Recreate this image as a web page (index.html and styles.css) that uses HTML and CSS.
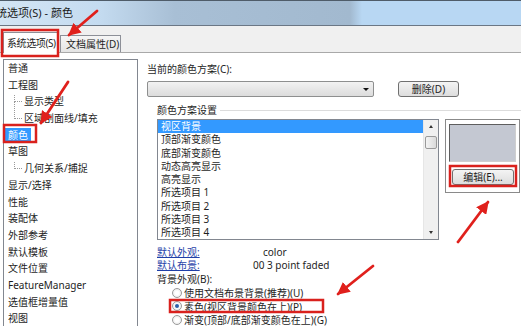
FILE: index.html
```html
<!DOCTYPE html>
<html lang="zh-CN">
<head>
    <meta charset="UTF-8">
    <meta name="viewport" content="width=device-width, initial-scale=1.0">
    <title>系统选项(S) - 颜色</title>
    <link rel="stylesheet" href="styles.css">
</head>
<body>

<div class="window">
    <div class="titlebar"><span class="title">系统选项(S) - 颜色</span></div>

    <div class="tabstrip">
        <div class="tab tab-active">系统选项(S)</div>
        <div class="tab">文档属性(D)</div>
    </div>

    <div class="page">
        <ul class="tree">
            <li>普通</li>
            <li>工程图</li>
            <li class="child first">显示类型</li>
            <li class="child">区域剖面线/填充</li>
            <li><span class="selected">颜色</span></li>
            <li>草图</li>
            <li class="child first">几何关系/捕捉</li>
            <li>显示/选择</li>
            <li>性能</li>
            <li>装配体</li>
            <li>外部参考</li>
            <li>默认模板</li>
            <li>文件位置</li>
            <li>FeatureManager</li>
            <li>选值框增量值</li>
            <li>视图</li>
        </ul>

        <div class="main">
            <div class="label">当前的颜色方案(C):</div>
            <div class="scheme-row">
                <div class="combo"><span class="combo-arrow"></span></div>
                <button class="btn btn-delete">删除(D)</button>
            </div>

            <div class="group-head"><span>颜色方案设置</span></div>
            <div class="group-body">
                <div class="listbox">
                    <ul class="items">
                        <li class="selected-item">视区背景</li>
                        <li>顶部渐变颜色</li>
                        <li>底部渐变颜色</li>
                        <li>动态高亮显示</li>
                        <li>高亮显示</li>
                        <li>所选项目 1</li>
                        <li>所选项目 2</li>
                        <li>所选项目 3</li>
                        <li>所选项目 4</li>
                    </ul>
                    <div class="scrollbar">
                        <span class="arrow-up"></span>
                        <span class="thumb"></span>
                        <span class="arrow-down"></span>
                    </div>
                </div>
                <div class="preview">
                    <div class="swatch"></div>
                    <button class="btn btn-edit">编辑(E)...</button>
                </div>
            </div>

            <div class="info">
                <div class="info-row"><a class="link">默认外观:</a><span class="value value-color">color</span></div>
                <div class="info-row"><a class="link">默认布景:</a><span class="value">00 3 point faded</span></div>
                <div class="info-row">背景外观(B):</div>
                <div class="radio"><span class="dot"></span>使用文档布景背景(推荐)(U)</div>
                <div class="radio"><span class="dot checked"></span>素色(视区背景颜色在上)(P)</div>
                <div class="radio"><span class="dot"></span>渐变(顶部/底部渐变颜色在上)(G)</div>
            </div>
        </div>
    </div>

    <!-- red annotation marks drawn over the dialog -->
    <svg class="marks" width="521" height="326" viewBox="0 0 521 326">
        <defs>
            <marker id="head" viewBox="0 0 10 10" refX="9" refY="5" markerWidth="4.5" markerHeight="4.5" orient="auto">
                <path d="M0,0 L10,5 L0,10 z" fill="#e0201c"/>
            </marker>
        </defs>
        <g fill="none" stroke="#d9211d" stroke-width="2.5">
            <rect x="2" y="30" width="56" height="26"/>
            <rect x="4" y="125" width="32" height="17"/>
            <rect x="450" y="166" width="66" height="20"/>
            <rect x="170" y="300" width="153" height="12"/>
        </g>
        <g stroke="#e0201c" stroke-width="2.8" stroke-linecap="round" marker-end="url(#head)">
            <line x1="97" y1="11" x2="69" y2="35"/>
            <line x1="68" y1="82" x2="41" y2="123"/>
            <line x1="373" y1="266" x2="338" y2="294"/>
            <line x1="458" y1="242" x2="488" y2="202"/>
        </g>
    </svg>
</div>

</body>
</html>
```

FILE: styles.css
```css
body {
    margin: 0;
    padding: 0;
    background-color: #ffffff;
    font-family: "Noto Sans", "Noto Sans CJK SC", sans-serif;
    font-size: 10px;
    color: #1e1e1e;
}

.window {
    position: relative;
    width: 521px;
    height: 326px;
    overflow: hidden;
    background-color: #ffffff;
}

.titlebar {
    box-sizing: border-box;
    height: 26px;
    border-top: 1px solid #4f5c69;
    border-bottom: 1px solid #6b7785;
    background: linear-gradient(to right, #d3e5f4 0, #c4dbf0 100px, #a8bfd5 175px, #a2b9cf 350px, #b8d7f3 362px, #b8d7f3 100%);
    overflow: hidden;
    white-space: nowrap;
}

.title {
    display: inline-block;
    margin-left: -15px;
    line-height: 24px;
    font-size: 11px;
    color: #1a1a1a;
}

.tabstrip {
    box-sizing: border-box;
    height: 27px;
    display: flex;
    align-items: flex-end;
    padding-left: 3px;
    background-color: #f0f0f0;
    border-bottom: 1px solid #a9a9a9;
}

.tab {
    box-sizing: border-box;
    height: 17px;
    width: 61px;
    padding-left: 5px;
    border: 1px solid #8d9098;
    border-bottom: none;
    background: linear-gradient(#f6f6f6, #e4e4e4);
    line-height: 16px;
    white-space: nowrap;
    margin-left: 2px;
}

.tab-active {
    height: 21px;
    width: 55px;
    margin-left: 0;
    margin-bottom: -1px;
    background: #ffffff;
    line-height: 20px;
    padding-left: 3px;
    letter-spacing: -0.4px;
}

.page {
    display: flex;
    align-items: flex-start;
}

/* left category tree */
.tree {
    box-sizing: border-box;
    list-style: none;
    margin: 6px 0 0 3px;
    padding: 0;
    width: 135px;
    height: 280px;
    border: 1px solid #828790;
    flex-shrink: 0;
}

.tree li {
    position: relative;
    height: 16.7px;
    line-height: 16.7px;
    padding-left: 4px;
    white-space: nowrap;
}

.tree li.child {
    padding-left: 20px;
}

.tree li.child::before {
    content: "";
    position: absolute;
    left: 10px;
    top: -8px;
    width: 7px;
    height: 16px;
    border-left: 1px dotted #9a9a9a;
    border-bottom: 1px dotted #9a9a9a;
}

.tree li.child.first::before {
    top: 2px;
    height: 6px;
}

.selected {
    display: inline-block;
    margin-left: -3px;
    padding: 0 3px;
    line-height: 15px;
    background-color: #3399ff;
    color: #ffffff;
}

/* right side */
.main {
    margin-left: 9px;
    flex: 1;
}

.label {
    margin-top: 9px;
    line-height: 14px;
}

.scheme-row {
    display: flex;
    margin-top: 5px;
}

.combo {
    position: relative;
    box-sizing: border-box;
    width: 227px;
    height: 16px;
    border: 1px solid #8e8f8f;
    border-radius: 2px;
    background: linear-gradient(#f2f2f2, #dcdcdc);
}

.combo-arrow {
    position: absolute;
    right: 4px;
    top: 6px;
    border-left: 3px solid transparent;
    border-right: 3px solid transparent;
    border-top: 3px solid #111111;
}

.btn {
    box-sizing: border-box;
    padding: 0;
    border: 1px solid #707070;
    border-radius: 3px;
    background: linear-gradient(#f4f4f4, #dddddd);
    font-family: "Noto Sans", "Noto Sans CJK SC", sans-serif;
    font-size: 10px;
    color: #1e1e1e;
    text-align: center;
}

.btn-delete {
    width: 61px;
    height: 16px;
    margin-left: 24px;
    line-height: 14px;
}

.group-head {
    display: flex;
    align-items: center;
    margin: 6px 0 0 3px;
    line-height: 14px;
}

.group-head span {
    padding: 0 3px 0 7px;
}

.group-head::after {
    content: "";
    flex: 1;
    border-top: 1px solid #dcdcdc;
}

.group-body {
    display: flex;
    align-items: flex-start;
    margin-top: 2px;
    padding-left: 10px;
}

.listbox {
    box-sizing: border-box;
    display: flex;
    width: 282px;
    height: 121px;
    border: 1px solid #828790;
    overflow: hidden;
}

.items {
    list-style: none;
    margin: 0;
    padding: 0;
    flex: 1;
}

.items li {
    height: 13.3px;
    line-height: 13.3px;
    padding-left: 3px;
    white-space: nowrap;
}

.items li.selected-item {
    background-color: #3399ff;
    color: #ffffff;
}

.scrollbar {
    display: flex;
    flex-direction: column;
    align-items: center;
    width: 14px;
    background-color: #f0f0f0;
    border-left: 1px solid #e6e6e6;
}

.arrow-up {
    margin-top: 5px;
    border-left: 2px solid transparent;
    border-right: 2px solid transparent;
    border-bottom: 3px solid #333333;
}

.thumb {
    box-sizing: border-box;
    width: 12px;
    height: 13px;
    margin-top: 8px;
    border: 1px solid #9a9a9a;
    border-radius: 2px;
    background: linear-gradient(to right, #f4f4f4, #dadada);
}

.arrow-down {
    margin-top: auto;
    margin-bottom: 5px;
    border-left: 2px solid transparent;
    border-right: 2px solid transparent;
    border-top: 3px solid #333333;
}

.preview {
    box-sizing: border-box;
    width: 75px;
    height: 74px;
    margin-left: 6px;
    border: 1px solid #8a8a8a;
    padding: 4px 2px 0 3px;
}

.swatch {
    box-sizing: border-box;
    width: 67px;
    height: 38px;
    border: 1px solid #5e5e5e;
    border-right-color: #cfcfcf;
    border-bottom-color: #cfcfcf;
    background-color: #c4c8d2;
}

.btn-edit {
    display: block;
    width: 62px;
    height: 16px;
    margin: 7px 0 0 3px;
    line-height: 14px;
}

.info {
    margin-top: 6px;
    padding-left: 10px;
}

.info-row {
    display: flex;
    line-height: 13.4px;
    white-space: nowrap;
}

.link {
    width: 96px;
    color: #1f3fa8;
    text-decoration: underline;
}

.value-color {
    padding-left: 10px;
}

.radio {
    display: flex;
    align-items: center;
    height: 13.4px;
    padding-left: 15px;
    white-space: nowrap;
}

.dot {
    box-sizing: border-box;
    position: relative;
    width: 10px;
    height: 10px;
    margin-right: 2px;
    border: 1px solid #9a9a9a;
    border-radius: 50%;
    background: radial-gradient(circle, #ffffff 30%, #e2e2e2 100%);
}

.dot.checked::after {
    content: "";
    position: absolute;
    left: 2px;
    top: 2px;
    width: 4px;
    height: 4px;
    border-radius: 50%;
    background-color: #2a5fa8;
}

.marks {
    position: absolute;
    left: 0;
    top: 0;
    pointer-events: none;
}
```
